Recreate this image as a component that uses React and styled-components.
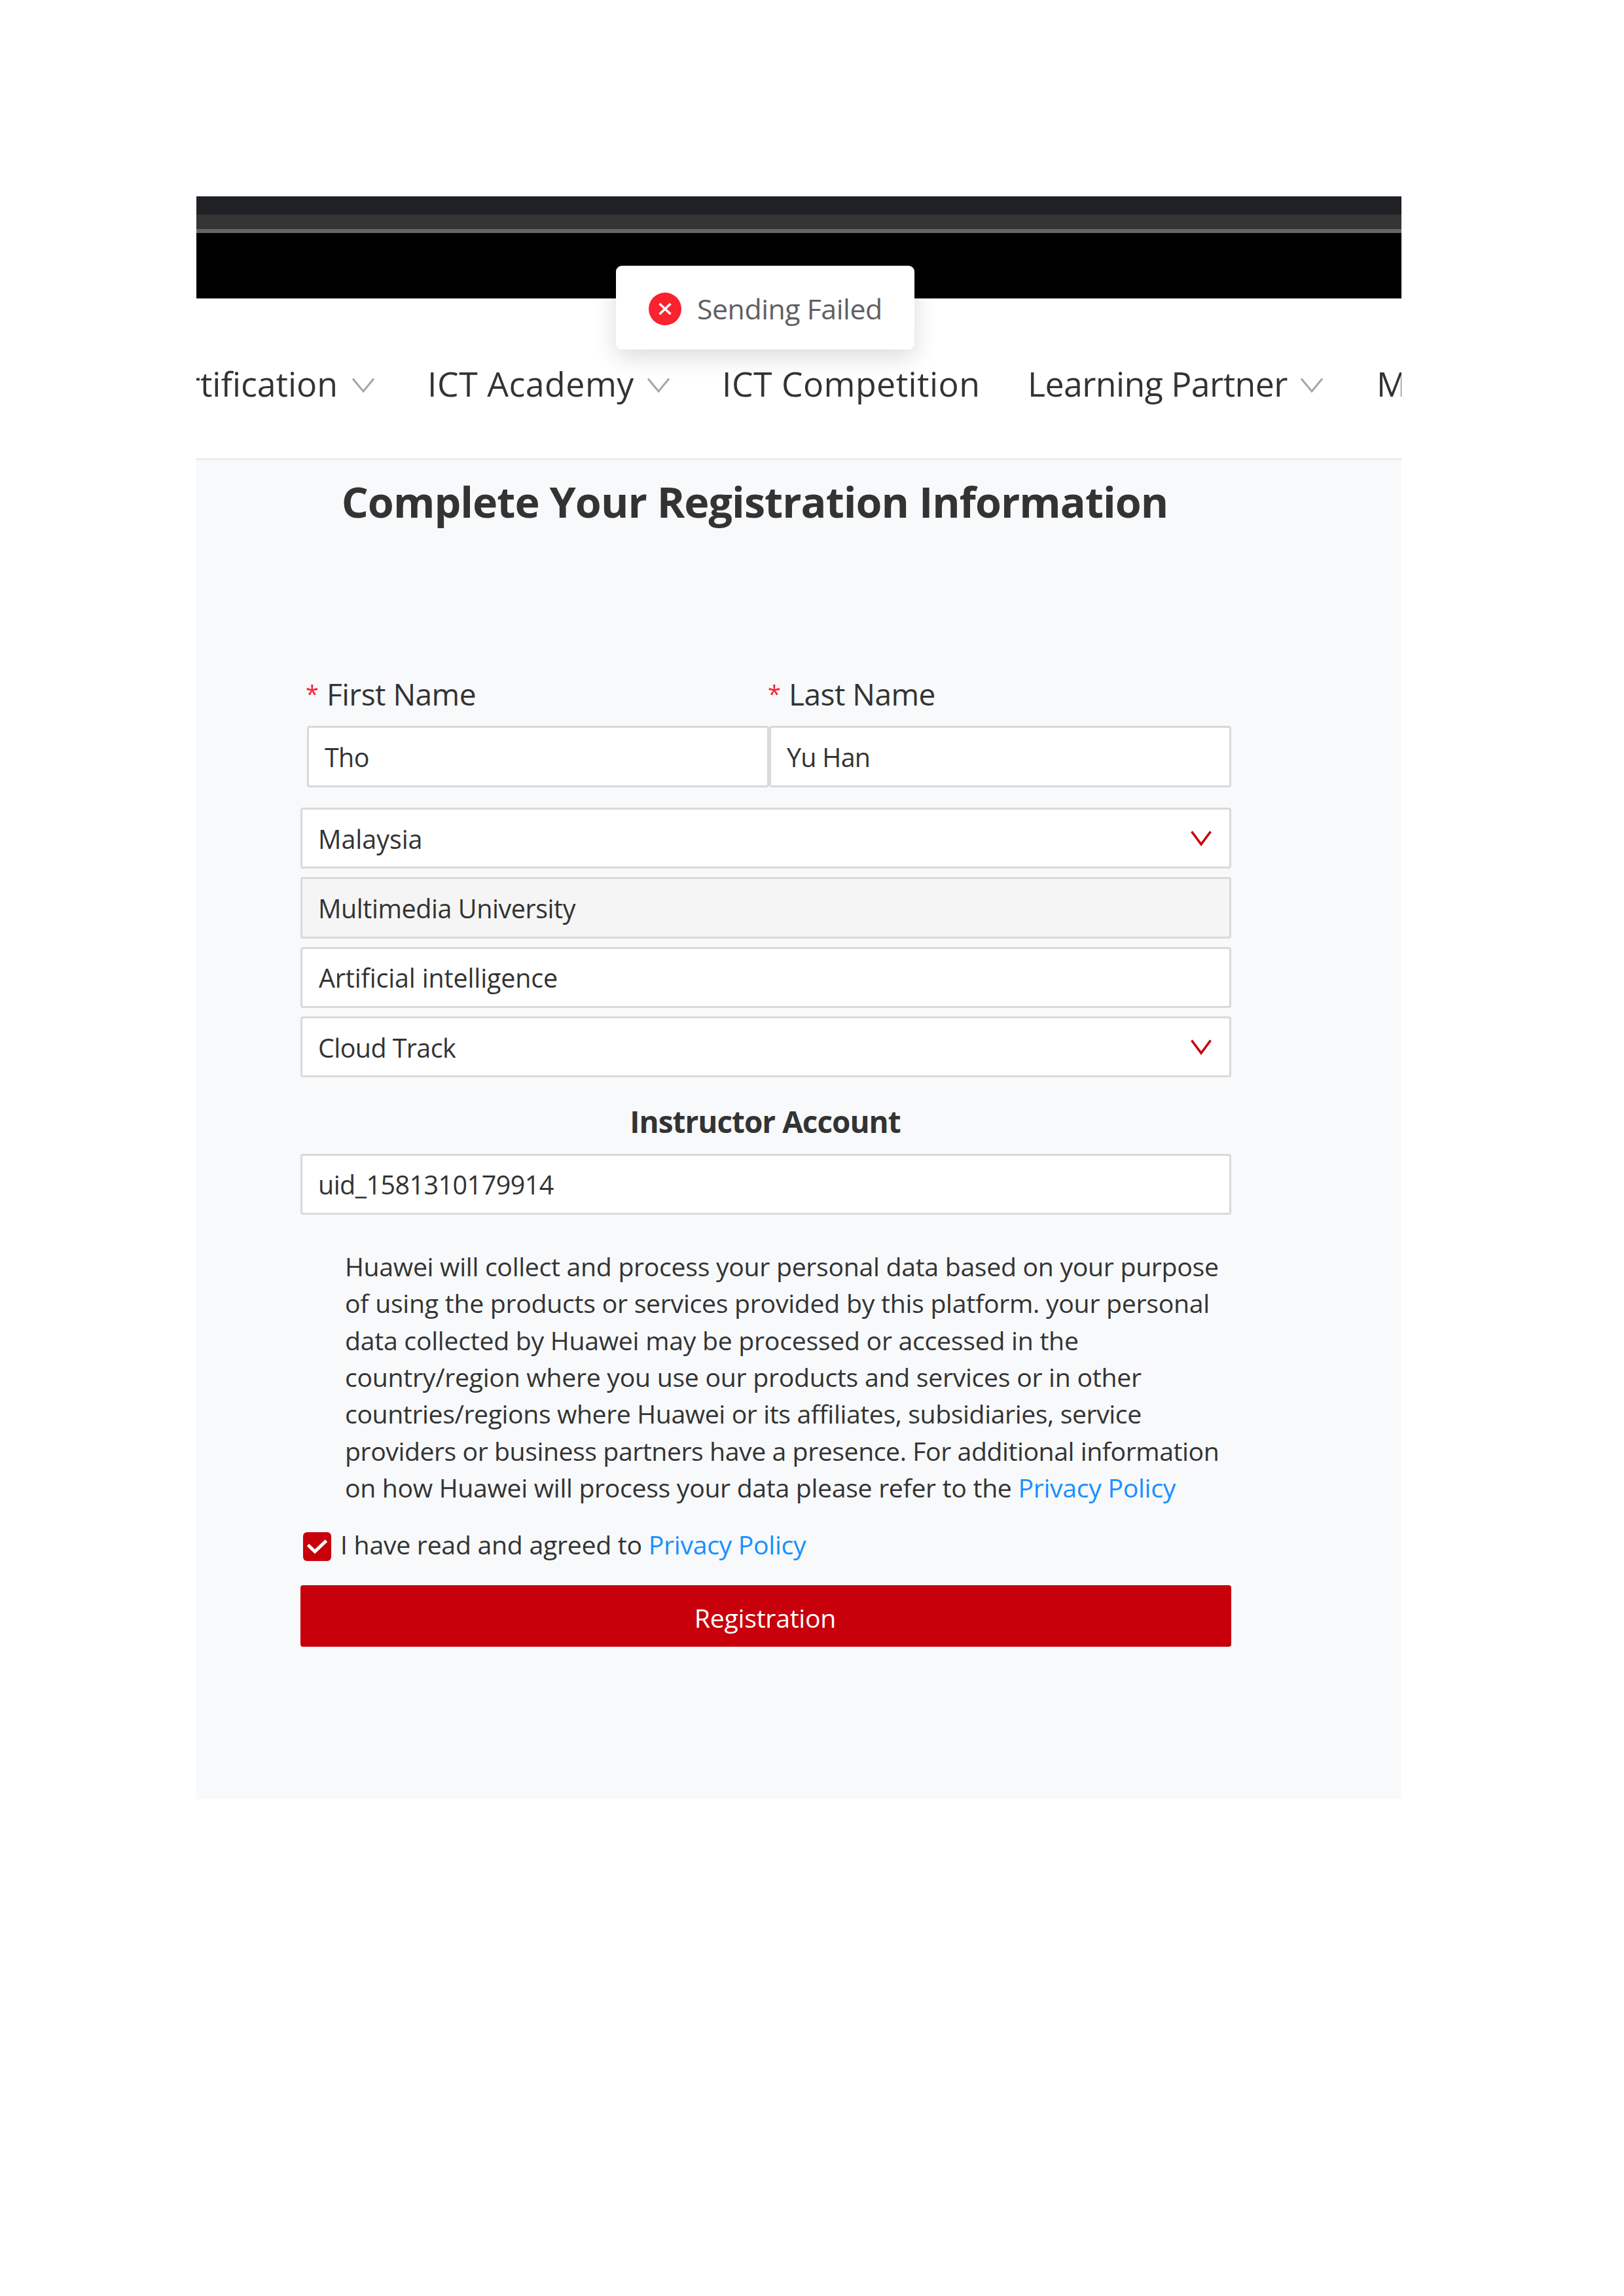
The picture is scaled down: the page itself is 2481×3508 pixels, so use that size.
import React from 'react';
import styled, { createGlobalStyle } from 'styled-components';

const GlobalStyle = createGlobalStyle`
  *, *::before, *::after { box-sizing: border-box; }
  body {
    margin: 0;
    background: #fff;
    font-family: "Open Sans", "Noto Sans", sans-serif;
    color: #333;
  }
`;

const Page = styled.div`
  height: 3508px;
  padding: 300px 340px 0 300px;
`;

const Frame = styled.div`
  position: relative;
  height: 2449px;
  overflow: hidden;
  display: flex;
  flex-direction: column;
`;

const Strip = styled.div`
  flex: none;
  height: ${(p) => p.$h}px;
  background: ${(p) => p.$color};
`;

const Nav = styled.nav`
  flex: none;
  height: 247px;
  padding-top: 16px;
  border-bottom: 3px solid #eceded;
  background: #fff;
  display: grid;
  grid-template-columns: 353px 450px 467px 533px 38px;
  align-items: center;
`;

const NavItem = styled.div`
  display: flex;
  align-items: center;
  gap: ${(p) => (p.$clipStart ? 22 : 20)}px;
  font-size: 51.8px;
  line-height: 72px;
  letter-spacing: ${(p) => p.$ls || 0}px;
  white-space: nowrap;
  ${(p) => p.$clipStart && 'justify-content: flex-end; padding-right: 81px;'}
`;

const NavArrow = styled.svg`
  flex: none;
  width: 34px;
  height: 24px;
  margin-top: 6px;
`;

const Toast = styled.div`
  position: absolute;
  left: 641px;
  top: 106px;
  width: 456px;
  height: 128px;
  padding-left: 50px;
  padding-top: 2px;
  display: flex;
  align-items: center;
  gap: 24px;
  border-radius: 9px;
  background: #fff;
  box-shadow: 0 11px 36px rgba(0, 0, 0, 0.15);
  color: #606060;
  font-size: 42.8px;
  letter-spacing: -0.45px;
  white-space: nowrap;
`;

const ToastIcon = styled.svg`
  flex: none;
  width: 50px;
  height: 50px;
  margin-top: 1px;
`;

const Form = styled.main`
  flex: 1;
  padding: 18px 260px 0 159px;
  background: #f7f9fa;
  display: flex;
  flex-direction: column;
`;

const Title = styled.h1`
  margin: 0 0 219px;
  padding-right: 34px;
  text-align: center;
  font-size: 64.6px;
  line-height: 90px;
  font-weight: 700;
  letter-spacing: -0.94px;
  white-space: nowrap;
`;

const NameRow = styled.div`
  display: grid;
  grid-template-columns: 1fr 1fr;
  margin: 0 0 31px 10px;
`;

const NameField = styled.div`
  display: flex;
  flex-direction: column;
  gap: 19px;
`;

const Label = styled.div`
  display: grid;
  grid-template-columns: 30px auto;
  font-size: 46px;
  line-height: 60px;
  letter-spacing: -0.5px;
`;

const Required = styled.span`
  margin-left: -2px;
  color: #f5222d;
  font-size: 36px;
`;

const Field = styled.div`
  height: ${(p) => p.$h || 93.3}px;
  padding: ${(p) => p.$drop || 0}px 27px 0 ${(p) => p.$indent}px;
  border: 3px solid #d9d9d9;
  border-radius: 4px;
  background: ${(p) => (p.$disabled ? '#f5f5f5' : '#fff')};
  display: flex;
  align-items: center;
  justify-content: space-between;
  font-size: 39.4px;
  letter-spacing: ${(p) => p.$ls}px;
  white-space: nowrap;
`;

const FieldStack = styled.div`
  display: flex;
  flex-direction: column;
  gap: 13px;
`;

const SelectArrow = styled.svg`
  width: 32px;
  height: 25px;
`;

const Subtitle = styled.h2`
  margin: 37px 0 20px;
  padding-right: 2px;
  text-align: center;
  font-size: 45.8px;
  line-height: 60px;
  font-weight: 700;
  letter-spacing: -0.95px;
`;

const Notice = styled.p`
  margin: 51px 0 40px 68px;
  font-size: 39.2px;
  line-height: 56.3px;
  white-space: nowrap;
`;

const Line = styled.span`
  display: block;
  letter-spacing: ${(p) => p.$ls}px;
`;

const Link = styled.a`
  color: #1890ff;
  letter-spacing: -0.3px;
`;

const Agree = styled.div`
  height: 44px;
  margin-left: 4px;
  display: flex;
  align-items: center;
  gap: 14px;
  font-size: 39.2px;
  letter-spacing: -0.26px;
  white-space: nowrap;
`;

const AgreeText = styled.span`
  line-height: 44px;
  margin-bottom: 6px;
`;

const Checkbox = styled.span`
  flex: none;
  width: 43px;
  height: 44px;
  border-radius: 6px;
  background: #c7000b;
  display: flex;
`;

const Submit = styled.button`
  flex: none;
  height: 94px;
  margin-top: 37px;
  padding: 5px 2px 0 0;
  border: 0;
  border-radius: 4px;
  background: #c7000b;
  color: #fff;
  font: 400 39.2px "Open Sans", "Noto Sans", sans-serif;
  letter-spacing: -0.25px;
`;

const NavChevron = () => (
  <NavArrow viewBox="0 0 34 24" fill="none" stroke="#a6a6a6" strokeWidth="3">
    <path d="M1 1.5 17 21 33 1.5" />
  </NavArrow>
);

const SelectChevron = () => (
  <SelectArrow viewBox="0 0 32 25" fill="none" stroke="#c7000b" strokeWidth="3.6">
    <path d="M1.5 1.5 16 21 30.5 1.5" />
  </SelectArrow>
);

const navItems = [
  { text: 'Certification', arrow: true, clipStart: true },
  { text: 'ICT Academy', arrow: true, ls: 0.52 },
  { text: 'ICT Competition', ls: 0.45 },
  { text: 'Learning Partner', arrow: true, ls: -0.56 },
  { text: 'M' },
];

const fields = [
  { text: 'Malaysia', indent: 24, ls: 0, select: true },
  { text: 'Multimedia University', indent: 24, ls: -0.4, disabled: true },
  { text: 'Artificial intelligence', indent: 25, ls: -0.12 },
  { text: 'Cloud Track', indent: 24, ls: -0.55, select: true },
];

const noticeLines = [
  ['Huawei will collect and process your personal data based on your purpose', -0.29],
  ['of using the products or services provided by this platform. your personal', -0.26],
  ['data collected by Huawei may be processed or accessed in the', -0.26],
  ['country/region where you use our products and services or in other', -0.27],
  ['countries/regions where Huawei or its affiliates, subsidiaries, service', -0.39],
  ['providers or business partners have a presence. For additional information', -0.43],
];

export default function App() {
  return (
    <Page>
      <GlobalStyle />
      <Frame>
        <Strip $h={28} $color="#202125" />
        <Strip $h={22} $color="#353535" />
        <Strip $h={6} $color="#666666" />
        <Strip $h={100} $color="#000" />
        <Nav>
          {navItems.map((n) => (
            <NavItem key={n.text} $ls={n.ls} $clipStart={n.clipStart}>
              <span>{n.text}</span>
              {n.arrow && <NavChevron />}
            </NavItem>
          ))}
        </Nav>
        <Form>
          <Title>Complete Your Registration Information</Title>
          <NameRow>
            <NameField>
              <Label><Required>*</Required>First Name</Label>
              <Field $h={94} $drop={2} $indent={24} $ls={-0.6}>Tho</Field>
            </NameField>
            <NameField>
              <Label><Required>*</Required>Last Name</Label>
              <Field $h={94} $drop={2} $indent={24} $ls={-0.7}>Yu Han</Field>
            </NameField>
          </NameRow>
          <FieldStack>
            {fields.map((f) => (
              <Field key={f.text} $drop={2} $indent={f.indent} $ls={f.ls} $disabled={f.disabled}>
                {f.text}
                {f.select && <SelectChevron />}
              </Field>
            ))}
          </FieldStack>
          <Subtitle>Instructor Account</Subtitle>
          <Field $h={93} $drop={1} $indent={24} $ls={-0.5}>uid_1581310179914</Field>
          <Notice>
            {noticeLines.map(([text, ls]) => (
              <Line key={text} $ls={ls}>{text}</Line>
            ))}
            <Line $ls={-0.31}>
              on how Huawei will process your data please refer to the <Link>Privacy Policy</Link>
            </Line>
          </Notice>
          <Agree>
            <Checkbox>
              <svg width="43" height="44" viewBox="0 0 43 44" fill="none" stroke="#fff" strokeWidth="5">
                <path d="M7.5 19.5 18 29.5 35.5 13" />
              </svg>
            </Checkbox>
            <AgreeText>
              I have read and agreed to <Link>Privacy Policy</Link>
            </AgreeText>
          </Agree>
          <Submit>Registration</Submit>
        </Form>
        <Toast>
          <ToastIcon viewBox="0 0 50 50">
            <circle cx="25" cy="25" r="25" fill="#f9222e" />
            <path d="M16.5 17 33.5 33M33.5 17 16.5 33" stroke="#fff" strokeWidth="3.6" />
          </ToastIcon>
          Sending Failed
        </Toast>
      </Frame>
    </Page>
  );
}
